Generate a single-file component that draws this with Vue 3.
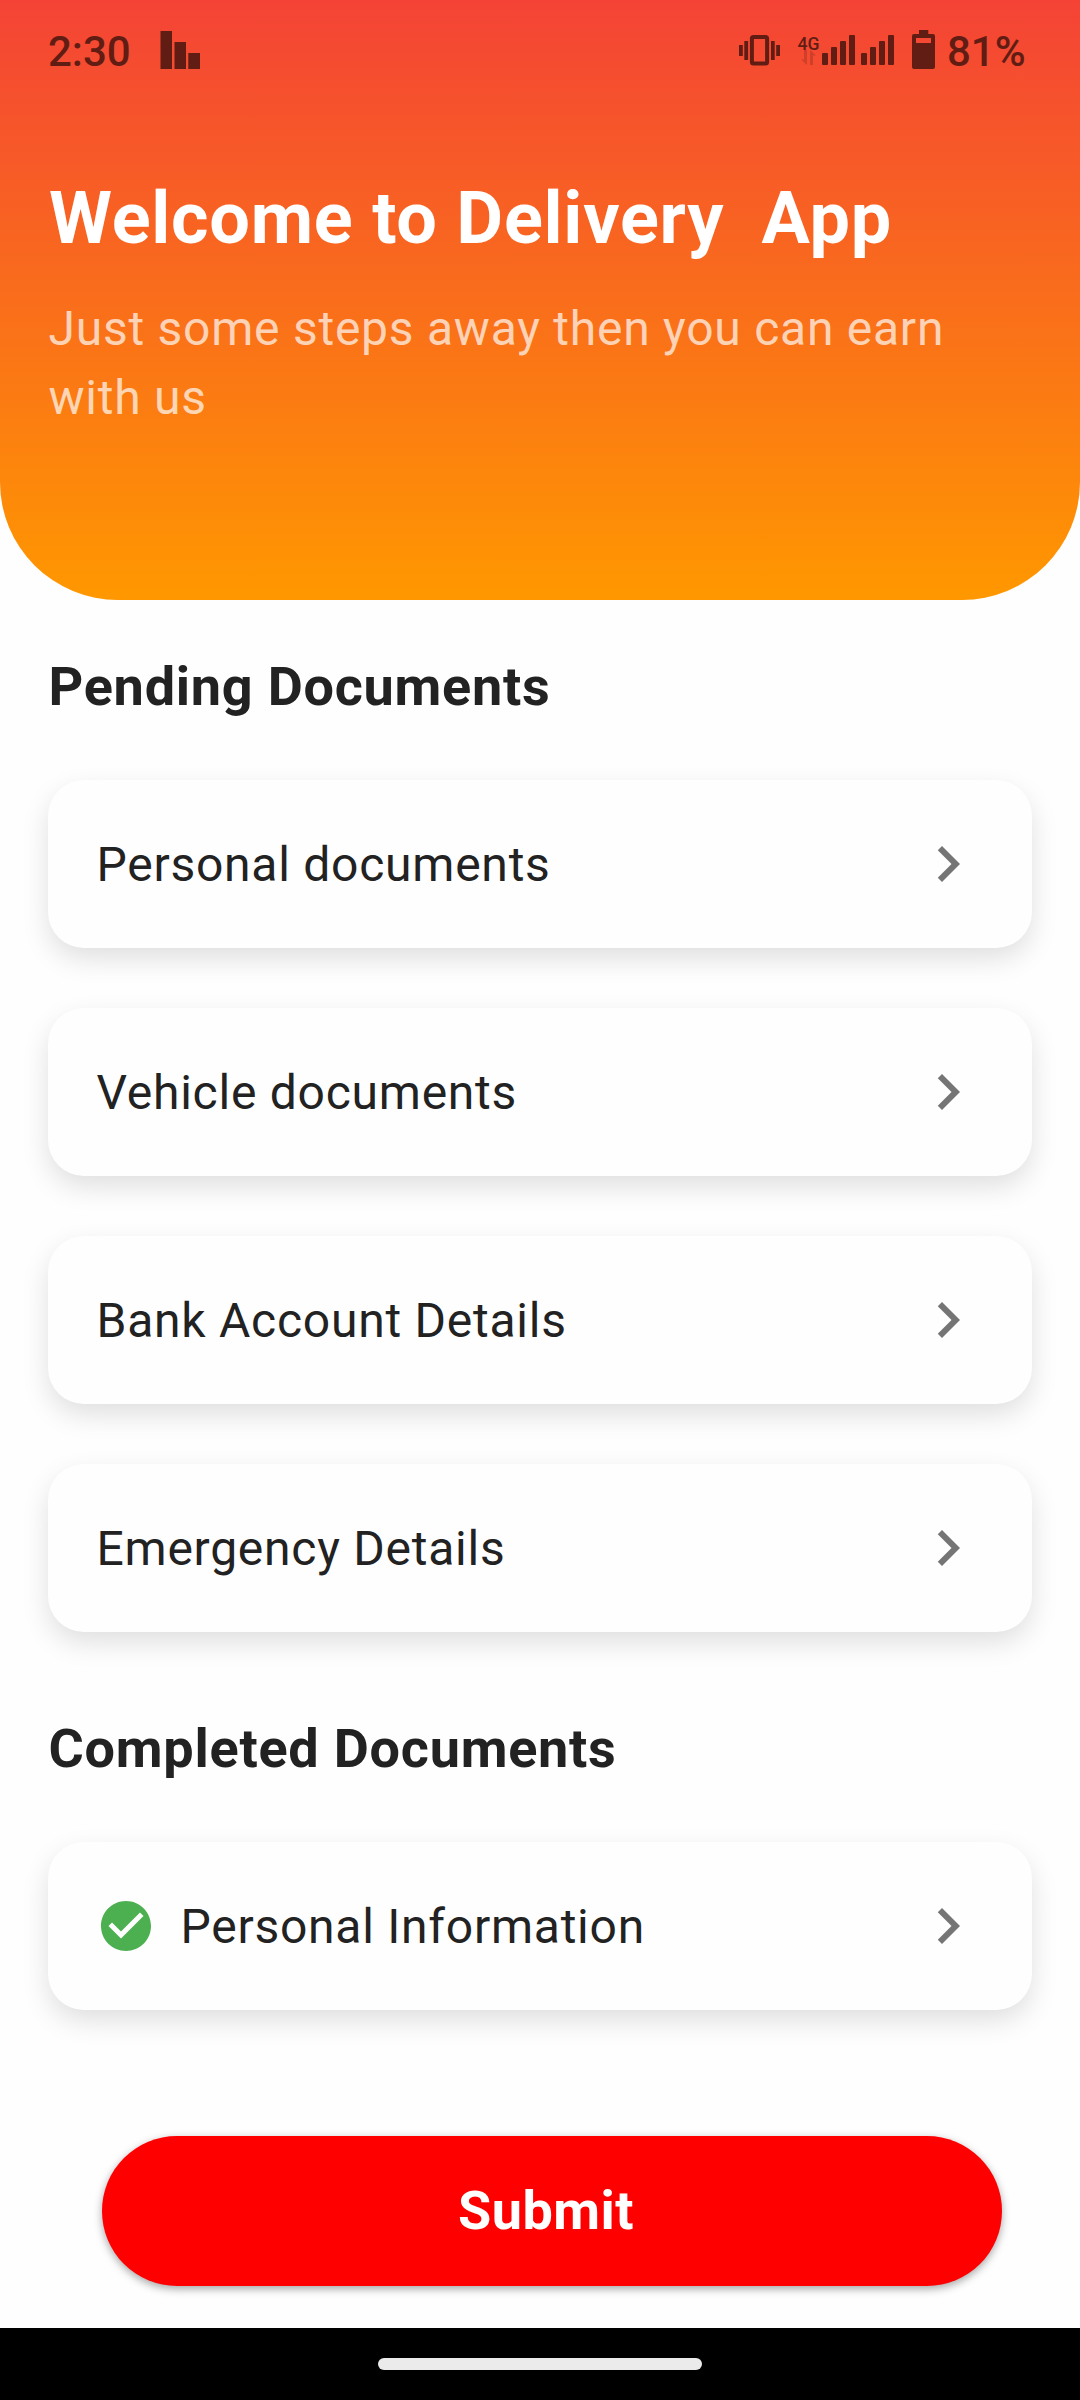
<script setup>
const pending = [
  'Personal documents',
  'Vehicle documents',
  'Bank Account Details',
  'Emergency Details',
]
const completed = ['Personal Information']
</script>

<template>
  <div class="screen">
    <header class="hero">
      <div class="status">
        <span class="clock">2:30</span>
        <svg class="app-icon" width="40" height="38" viewBox="0 0 40 38">
          <path d="M.5 0H12v38H.5zM14.5 11H26v27H14.5zM28.3 22H40v16H28.3z" fill="currentColor" />
        </svg>
        <svg class="indicators" width="200" height="48" viewBox="736 24 200 48" fill="currentColor">
          <!-- vibrate -->
          <rect x="751.9" y="37" width="15.2" height="26.6" rx="1.6" fill="none" stroke="currentColor" stroke-width="4" />
          <path d="M739 45h3.8v11H739zM744.3 41h3.8v19h-3.8zM771 41h3.7v19H771zM776.2 45h3.8v11h-3.8z" />
          <!-- network -->
          <text x="797.6" y="50" font-size="17.6" font-weight="500">4G</text>
          <path d="M804 50h3v9.5h0V65l-5.8-5.5H804zM810 65V50l6 5.5h-3V65z" opacity=".25" />
          <rect x="822" y="53" width="6" height="12" rx="1" />
          <rect x="831" y="47" width="6" height="18" rx="1" />
          <rect x="840" y="41" width="6" height="24" rx="1" />
          <rect x="849" y="35" width="6" height="30" rx="1" />
          <rect x="861" y="53" width="6" height="12" rx="1" />
          <rect x="870" y="47" width="6" height="18" rx="1" />
          <rect x="879" y="41" width="6" height="24" rx="1" />
          <rect x="888" y="35" width="6" height="30" rx="1" />
          <!-- battery -->
          <path fill-rule="evenodd" d="M919 30h9.3v4H933a2 2 0 0 1 2 2v31a2 2 0 0 1-2 2h-19a2 2 0 0 1-2-2V36a2 2 0 0 1 2-2h5zM916 38v5h15v-5z" />
        </svg>
        <span class="percent">81%</span>
      </div>
      <h1>Welcome to Delivery&nbsp; App</h1>
      <p>Just some steps away then you can earn with us</p>
    </header>

    <main>
      <h2>Pending Documents</h2>
      <ul>
        <li v-for="item in pending" :key="item" class="card">
          <span class="label">{{ item }}</span>
          <svg class="chevron" viewBox="0 0 24 24">
            <path d="M10 6L8.59 7.41 13.17 12l-4.58 4.59L10 18l6-6z" fill="currentColor" />
          </svg>
        </li>
      </ul>
      <h2 class="second">Completed Documents</h2>
      <ul>
        <li v-for="item in completed" :key="item" class="card">
          <svg class="check" viewBox="0 0 24 24">
            <path d="M12 2C6.48 2 2 6.48 2 12s4.48 10 10 10 10-4.48 10-10S17.52 2 12 2zm-2 15l-5-5 1.41-1.41L10 14.17l7.59-7.59L19 8l-9 9z" fill="currentColor" />
          </svg>
          <span class="label">{{ item }}</span>
          <svg class="chevron" viewBox="0 0 24 24">
            <path d="M10 6L8.59 7.41 13.17 12l-4.58 4.59L10 18l6-6z" fill="currentColor" />
          </svg>
        </li>
      </ul>
      <button class="submit" type="button">Submit</button>
    </main>

    <footer class="nav"><span class="handle"></span></footer>
  </div>
</template>

<style>
body {
  margin: 0;
}
</style>

<style scoped>
.screen {
  width: 1080px;
  height: 2400px;
  display: flex;
  flex-direction: column;
  overflow: hidden;
  background: #fefefe;
  color: #222;
  font-family: Roboto, "Liberation Sans", sans-serif;
}
.hero {
  box-sizing: border-box;
  height: 600px;
  flex: none;
  padding: 0 48px;
  border-radius: 0 0 118px 118px;
  background: linear-gradient(#f44336, #ff9800);
}
.status {
  display: flex;
  align-items: flex-start;
  height: 168px;
  color: #611d13;
  font-size: 42px;
  font-weight: 500;
  line-height: 50px;
}
.clock {
  width: 112px;
  padding-top: 27px;
}
.app-icon {
  margin-top: 31px;
}
.indicators {
  margin-top: 24px;
  margin-left: auto;
}
.percent {
  width: 85px;
  padding-top: 27px;
  margin-left: 11px;
}
h1,
h2,
p,
ul {
  margin: 0;
  padding: 0;
}
h1 {
  padding-left: 1px;
  color: #fff;
  font-size: 72px;
  font-weight: 700;
  line-height: 101px;
  letter-spacing: 0.75px;
  white-space: nowrap;
}
p {
  margin-top: 25px;
  padding-left: 0.5px;
  color: rgba(255, 255, 255, 0.7);
  font-size: 48px;
  line-height: 69px;
  letter-spacing: 0.75px;
}
main {
  flex: 1;
  display: flex;
  flex-direction: column;
  padding: 54px 48px 0;
}
h2 {
  padding-left: 0.5px;
  font-size: 54px;
  font-weight: 700;
  line-height: 65px;
  letter-spacing: 0.75px;
}
h2.second {
  margin-top: 84px;
}
ul {
  display: flex;
  flex-direction: column;
  gap: 60px;
  margin-top: 61px;
  list-style: none;
}
.card {
  display: flex;
  align-items: center;
  box-sizing: border-box;
  height: 168px;
  padding: 0 48px;
  border-radius: 36px;
  background: #fefefe;
  box-shadow: 0 11px 28px -1px rgba(0, 0, 0, 0.13);
}
.label {
  flex: 1;
  padding: 2px 0 0 0.5px;
  font-size: 48px;
  line-height: 56px;
  letter-spacing: 0.75px;
}
.chevron {
  width: 72px;
  height: 72px;
  color: #757575;
}
.check {
  width: 60px;
  height: 60px;
  margin-right: 24px;
  color: #4caf50;
}
.submit {
  width: 900px;
  height: 150px;
  margin: 126px 0 0 54px;
  padding: 0 12px 0 0;
  border: 0;
  border-radius: 75px;
  background: #f00;
  box-shadow: 0 3px 8px rgba(0, 0, 0, 0.35);
  color: #fff;
  font: 700 54px/64px Roboto, "Liberation Sans", sans-serif;
  letter-spacing: 0.5px;
}
.nav {
  display: flex;
  align-items: center;
  justify-content: center;
  flex: none;
  height: 72px;
  background: #000;
}
.handle {
  width: 324px;
  height: 12px;
  border-radius: 6px;
  background: #ebebeb;
}
</style>
